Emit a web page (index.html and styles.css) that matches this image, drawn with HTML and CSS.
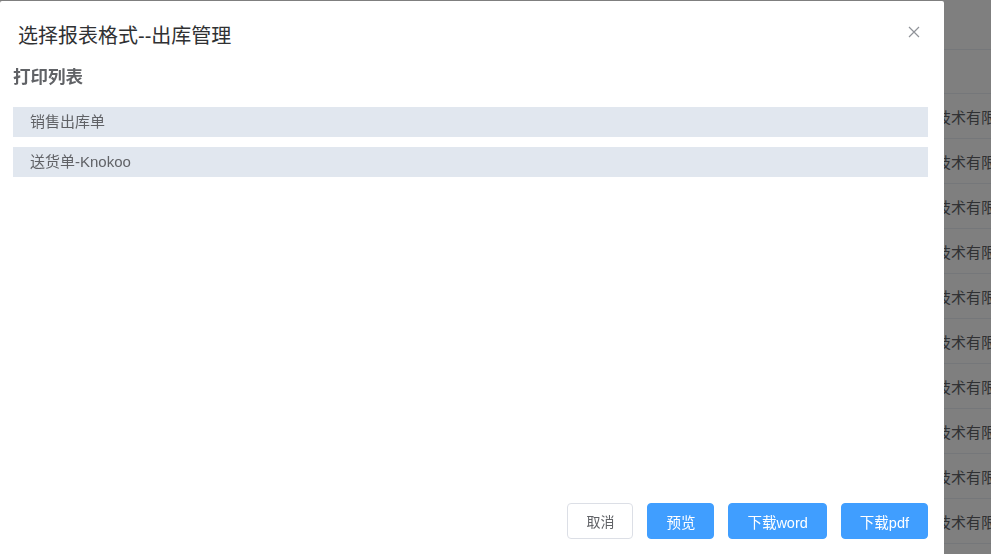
FILE: index.html
```html
<!DOCTYPE html>
<html lang="zh-CN">
<head>
    <meta charset="UTF-8">
    <meta name="viewport" content="width=device-width, initial-scale=1.0">
    <title>选择报表格式--出库管理</title>
    <link rel="stylesheet" href="styles.css">
</head>
<body>
    <div class="page">
        <div class="table-head"></div>
        <div class="table-row"></div>
        <div class="table-row"><span class="cell">科技技术有限公司</span></div>
        <div class="table-row"><span class="cell">科技技术有限公司</span></div>
        <div class="table-row"><span class="cell">科技技术有限公司</span></div>
        <div class="table-row"><span class="cell">科技技术有限公司</span></div>
        <div class="table-row"><span class="cell">科技技术有限公司</span></div>
        <div class="table-row"><span class="cell">科技技术有限公司</span></div>
        <div class="table-row"><span class="cell">科技技术有限公司</span></div>
        <div class="table-row"><span class="cell">科技技术有限公司</span></div>
        <div class="table-row"><span class="cell">科技技术有限公司</span></div>
        <div class="table-row"><span class="cell">科技技术有限公司</span></div>
    </div>

    <div class="mask"></div>

    <div class="dialog">
        <div class="dialog-header">
            <span class="dialog-title">选择报表格式--出库管理</span>
            <button class="dialog-close" aria-label="关闭">
                <svg width="12" height="12" viewBox="0 0 12 12">
                    <path d="M1 1 L11 11 M11 1 L1 11" stroke="#909399" stroke-width="1.2" fill="none"/>
                </svg>
            </button>
        </div>
        <div class="dialog-body">
            <h3 class="list-title">打印列表</h3>
            <ul class="report-list">
                <li>销售出库单</li>
                <li>送货单-Knokoo</li>
            </ul>
        </div>
        <div class="dialog-footer">
            <button class="btn">取消</button>
            <button class="btn btn-primary">预览</button>
            <button class="btn btn-primary">下载word</button>
            <button class="btn btn-primary">下载pdf</button>
        </div>
    </div>
</body>
</html>
```

FILE: styles.css
```css
html, body {
    margin: 0;
    padding: 0;
    height: 100%;
    overflow: hidden;
}
body {
    font-family: "Liberation Sans", "Noto Sans CJK SC", sans-serif;
    background: #fff;
    color: #606266;
}

/* page behind the dialog */
.page {
    width: 100%;
}
.table-head {
    height: 50px;
    border-bottom: 1px solid #ebeef5;
    box-sizing: border-box;
}
.table-row {
    height: 45px;
    border-bottom: 1px solid #ebeef5;
    box-sizing: border-box;
    display: flex;
    align-items: center;
    padding-left: 906px;
    font-size: 15px;
    white-space: nowrap;
}
.table-row:nth-child(2) {
    height: 44px;
}
.cell {
    color: #606266;
}

.mask {
    position: fixed;
    inset: 0;
    background: rgba(0, 0, 0, 0.5);
}

/* dialog */
.dialog {
    position: fixed;
    left: 0;
    top: 1px;
    width: 944px;
    bottom: 0;
    background: #fff;
    display: flex;
    flex-direction: column;
    border-radius: 2px 2px 0 0;
}
.dialog-header {
    display: flex;
    justify-content: space-between;
    align-items: center;
    padding: 20px 24px 0 18px;
    height: 26px;
}
.dialog-close {
    border: none;
    background: none;
    padding: 0;
    width: 12px;
    height: 12px;
    display: flex;
    cursor: pointer;
    margin-top: -4px;
}
.dialog-title {
    font-size: 20px;
    color: #303133;
}
.dialog-body {
    flex: 1;
    padding: 0 16px 0 13px;
}
.list-title {
    margin: 18px 0 18px;
    font-size: 17.5px;
    font-weight: bold;
    color: #606266;
    line-height: 24px;
}
.report-list {
    list-style: none;
    margin: 0;
    padding: 0;
    display: flex;
    flex-direction: column;
    gap: 10px;
}
.report-list li {
    background: #e1e7ef;
    height: 30px;
    line-height: 30px;
    padding-left: 17px;
    font-size: 15px;
    color: #606266;
}
.dialog-footer {
    display: flex;
    justify-content: flex-end;
    gap: 14px;
    padding: 0 16px 15px 0;
}
.btn {
    font-family: inherit;
    font-size: 14px;
    height: 36px;
    padding: 0 18px;
    border-radius: 4px;
    border: 1px solid #dcdfe6;
    background: #fff;
    color: #606266;
    cursor: pointer;
}
.btn-primary {
    background: #409eff;
    border-color: #409eff;
    color: #fff;
    font-size: 14.5px;
}
```
